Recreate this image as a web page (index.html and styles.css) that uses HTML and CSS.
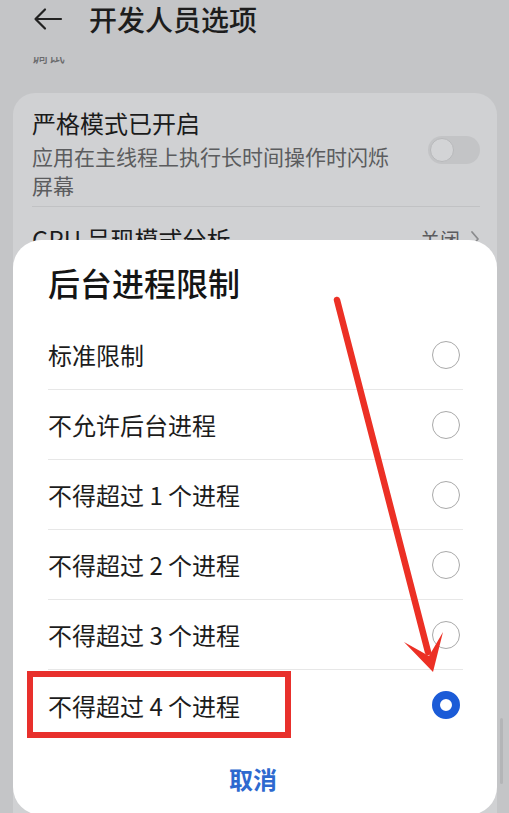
FILE: index.html
```html
<!DOCTYPE html>
<html lang="zh-CN">
<head>
<meta charset="utf-8">
<title>开发人员选项</title>
<link rel="stylesheet" href="styles.css">
</head>
<body>
<div class="page">
  <header class="topbar">
    <svg class="back" width="30" height="24" viewBox="0 0 30 24" aria-hidden="true">
      <path d="M28 12H3 M12 2.5L2.5 12L12 21.5" fill="none" stroke="#222" stroke-width="2.2" stroke-linecap="round" stroke-linejoin="round"/>
    </svg>
    <h1 class="title">开发人员选项</h1>
  </header>
  <div class="clip"><span>调试</span></div>

  <section class="card">
    <div class="item">
      <div class="item-text">
        <div class="item-title">严格模式已开启</div>
        <div class="item-sub">应用在主线程上执行长时间操作时闪烁屏幕</div>
      </div>
      <div class="toggle"><div class="knob"></div></div>
    </div>
    <div class="item item-gpu">
      <div class="item-title">GPU 呈现模式分析</div>
      <div class="item-value">关闭
        <svg width="10" height="18" viewBox="0 0 10 18" aria-hidden="true"><path d="M2 2l6 7-6 7" fill="none" stroke="#8a8b8d" stroke-width="1.8" stroke-linecap="round" stroke-linejoin="round"/></svg>
      </div>
    </div>
  </section>

  <div class="scrollbar"></div>

  <div class="dialog">
    <h2 class="dlg-title">后台进程限制</h2>
    <ul class="options">
      <li class="opt"><span>标准限制</span><i class="radio"></i></li>
      <li class="opt"><span>不允许后台进程</span><i class="radio"></i></li>
      <li class="opt"><span>不得超过 1 个进程</span><i class="radio"></i></li>
      <li class="opt"><span>不得超过 2 个进程</span><i class="radio"></i></li>
      <li class="opt"><span>不得超过 3 个进程</span><i class="radio"></i></li>
      <li class="opt"><span>不得超过 4 个进程</span><i class="radio checked"></i></li>
    </ul>
    <div class="cancel">取消</div>
  </div>

  <div class="redbox"></div>
  <svg class="arrow" width="509" height="813" viewBox="0 0 509 813" aria-hidden="true">
    <line x1="337" y1="300" x2="428" y2="652" stroke="#ec3025" stroke-width="6.5" stroke-linecap="round"/>
    <polygon points="404,642 429,656 443,632 433,672" fill="#ec3025"/>
  </svg>
</div>
</body>
</html>
```
FILE: styles.css
```css
* { box-sizing: border-box; }
html, body {
  margin: 0;
  padding: 0;
  background: #c4c5c7;
}
body {
  font-family: "Noto Sans CJK SC", "Noto Sans", sans-serif;
  color: #1c1c1c;
}
.page {
  position: relative;
  width: 509px;
  height: 813px;
  overflow: hidden;
}
.topbar {
  height: 38px;
  display: flex;
  align-items: center;
  padding-left: 33px;
}
.back { display: block; }
.title {
  margin: 0 0 0 26px;
  font-size: 28px;
  font-weight: 500;
  line-height: 38px;
  color: #1d1d1d;
}
.clip {
  margin: 19px 0 0 31px;
  height: 7px;
  overflow: hidden;
}
.clip span {
  display: block;
  margin-top: -11px;
  font-size: 17px;
  line-height: 18px;
  color: #6a6b6d;
}
.card {
  margin: 29px 12px 0 13px;
  background: #d0d1d3;
  border-radius: 22px;
  padding: 0 17px 0 19px;
  height: 760px;
}
.item {
  display: flex;
  align-items: center;
  padding: 14px 0 6px;
  border-bottom: 1px solid #c1c2c4;
}
.item-text { flex: 1; }
.item-title {
  font-size: 24px;
  line-height: 32px;
  color: #1b1b1b;
}
.item-sub {
  margin-top: 3px;
  font-size: 21px;
  line-height: 29px;
  color: #5b5c5e;
  width: 366px;
}
.toggle {
  width: 52px;
  height: 28px;
  border-radius: 14px;
  background: #c3c4c6;
  position: relative;
  margin-top: -8px;
}
.knob {
  position: absolute;
  left: 2px;
  top: 2px;
  width: 24px;
  height: 24px;
  border-radius: 50%;
  background: #d3d4d6;
  border: 1px solid #b8b9bb;
}
.item-gpu {
  padding: 16px 0 16px;
  justify-content: space-between;
  border-bottom: none;
}
.item-value {
  display: flex;
  align-items: center;
  gap: 10px;
  font-size: 20px;
  color: #5b5c5e;
}
.scrollbar {
  position: absolute;
  left: 500px;
  top: 718px;
  width: 3px;
  height: 66px;
  border-radius: 2px;
  background: #b4b5b7;
}
.dialog {
  position: absolute;
  left: 13px;
  top: 240px;
  width: 484px;
  height: 575px;
  background: #ffffff;
  border-radius: 28px;
  padding: 0;
}
.dlg-title {
  margin: 0;
  padding: 24px 0 0 35px;
  height: 80px;
  font-size: 32px;
  line-height: 36px;
  font-weight: 500;
  color: #151515;
}
.options {
  list-style: none;
  margin: 0 34px 0 35px;
  padding: 0;
}
.opt {
  height: 70px;
  display: flex;
  align-items: center;
  justify-content: space-between;
  border-bottom: 1px solid #e7e7e7;
  font-size: 24px;
  color: #1c1c1c;
}
.opt:last-child { border-bottom: none; }
.radio {
  display: block;
  width: 28px;
  height: 28px;
  border-radius: 50%;
  border: 1.6px solid #a9a9a9;
  margin-right: 3px;
}
.radio.checked {
  border: 8px solid #1b5bd7;
}
.cancel {
  height: 76px;
  display: flex;
  align-items: center;
  justify-content: center;
  font-size: 24px;
  font-weight: 700;
  color: #2e69cf;
  padding-right: 4px;
}
.redbox {
  position: absolute;
  left: 27px;
  top: 671px;
  width: 264px;
  height: 67px;
  border: 6px solid #e8302c;
}
.arrow {
  position: absolute;
  left: 0;
  top: 0;
  pointer-events: none;
}
```
